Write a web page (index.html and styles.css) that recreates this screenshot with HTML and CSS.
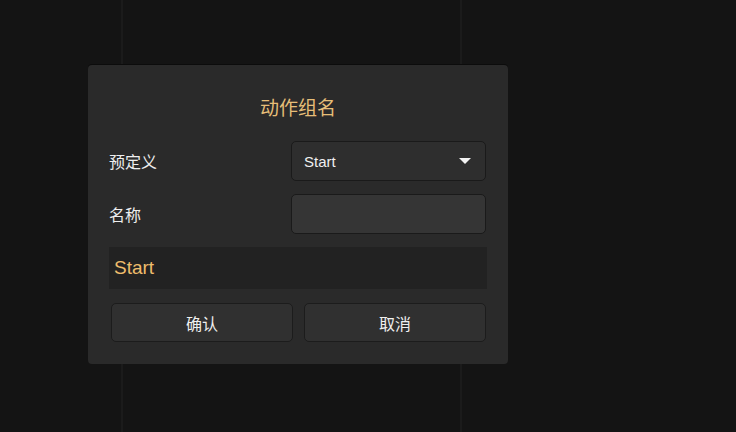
FILE: index.html
```html
<!DOCTYPE html>
<html lang="zh">
<head>
<meta charset="utf-8">
<link rel="stylesheet" href="styles.css">
</head>
<body>
<div class="app">
  <div class="col col-a"></div>
  <div class="col col-b"></div>
  <div class="col col-c"></div>
</div>
<div class="dialog">
  <div class="title">动作组名</div>
  <div class="row">
    <span class="label">预定义</span>
    <div class="select">
      <span>Start</span>
      <svg class="caret" width="12" height="6" viewBox="0 0 12 6"><path d="M0 0 H12 L6 6 Z" fill="#f2f2f2"/></svg>
    </div>
  </div>
  <div class="row">
    <span class="label">名称</span>
    <div class="input"></div>
  </div>
  <div class="preview">Start</div>
  <div class="buttons">
    <button class="btn">确认</button>
    <button class="btn">取消</button>
  </div>
</div>
</body>
</html>
```

FILE: styles.css
```css
html, body {
  margin: 0;
  padding: 0;
  background: #141414;
  font-family: "Liberation Sans", "Noto Sans CJK SC", sans-serif;
}
.app {
  display: flex;
  height: 432px;
  width: 736px;
}
.col { height: 100%; }
.col-a { width: 121px; border-right: 2px solid #1b1b1b; }
.col-b { width: 337px; border-right: 2px solid #1b1b1b; }
.col-c { flex: 1; }

.dialog {
  position: absolute;
  left: 88px;
  top: 65px;
  width: 420px;
  height: 299px;
  box-sizing: border-box;
  background: #2a2a2a;
  border-radius: 4px;
  box-shadow: 0 -1px 0 #0c0c0c;
  padding: 30px 21px 0 21px;
  display: flex;
  flex-direction: column;
}
.title {
  text-align: center;
  color: #e6be78;
  font-size: 19px;
  line-height: 24px;
  height: 24px;
  margin-bottom: 22px;
  font-family: "Noto Sans CJK SC", sans-serif;
}
.row {
  display: flex;
  align-items: center;
  justify-content: space-between;
  height: 40px;
  margin-bottom: 13px;
  padding-right: 1px;
}
.label {
  color: #eeeeee;
  font-size: 16px;
  font-family: "Noto Sans CJK SC", sans-serif;
}
.select, .input {
  width: 195px;
  height: 40px;
  box-sizing: border-box;
  border: 1px solid #1a1a1a;
  border-radius: 5px;
}
.select {
  background: #2e2e2e;
  display: flex;
  align-items: center;
  justify-content: space-between;
  padding: 0 14px 0 12px;
  color: #f0f0f0;
  font-size: 15px;
}
.caret { display: block; }
.input { background: #353535; }
.preview {
  height: 42px;
  width: 378px;
  background: #222222;
  color: #efbd6c;
  font-size: 19px;
  line-height: 42px;
  padding-left: 5px;
  box-sizing: border-box;
  margin-bottom: 14px;
}
.buttons {
  display: flex;
  gap: 11px;
  padding: 0 1px 0 2px;
}
.btn {
  flex: 1;
  height: 39px;
  background: #303030;
  border: 1px solid #1c1c1c;
  border-radius: 5px;
  color: #efefef;
  font-size: 16px;
  font-family: "Noto Sans CJK SC", sans-serif;
  padding: 0;
}
```
